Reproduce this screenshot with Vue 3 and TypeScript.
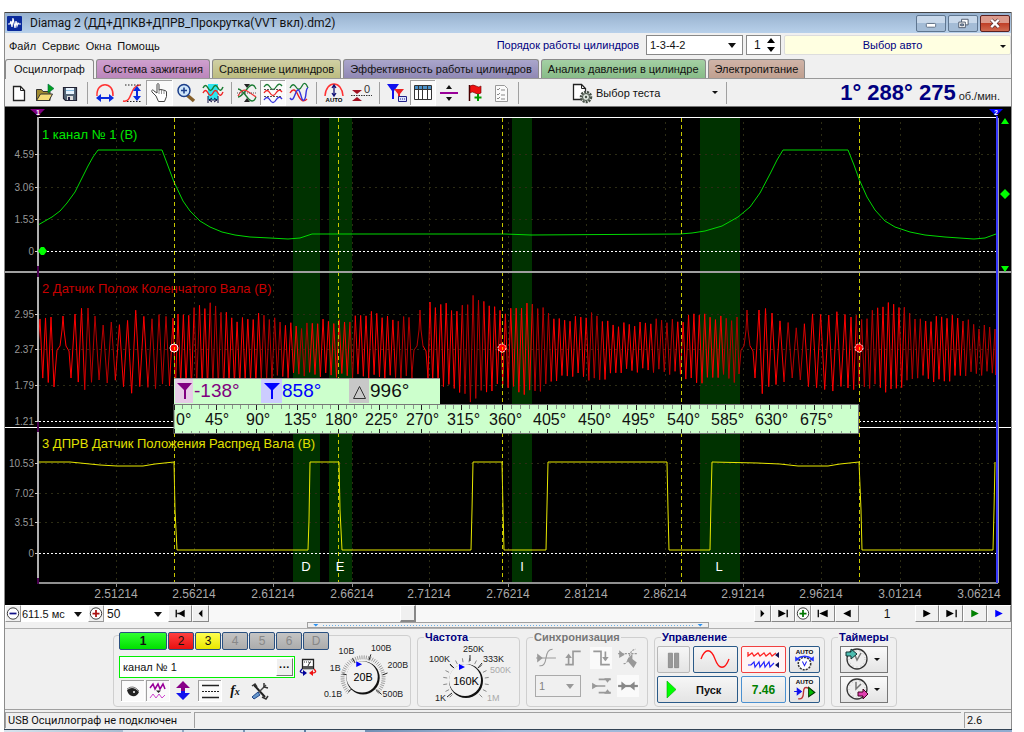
<script setup lang="ts">
import { ref } from 'vue'

type Point = [number, number]

const menu = ['Файл', 'Сервис', 'Окна', 'Помощь']

const tabs = [
  { label: 'Осциллограф', tone: 'plain' },
  { label: 'Система зажигания', tone: 'pink' },
  { label: 'Сравнение цилиндров', tone: 'olive' },
  { label: 'Эффективность работы цилиндров', tone: 'violet' },
  { label: 'Анализ давления в цилиндре', tone: 'green' },
  { label: 'Электропитание', tone: 'brown' },
]
const activeTab = ref(0)
const channelName = ref('канал № 1')
const cylinderCount = ref('1')
const page = ref('1')

const channels = [
  { label: '1', tone: 'lime' },
  { label: '2', tone: 'red' },
  { label: '3', tone: 'yellow' },
  { label: '4', tone: 'off' },
  { label: '5', tone: 'off' },
  { label: '6', tone: 'off' },
  { label: 'D', tone: 'off' },
]

// Plot geometry
const columns = [116, 194, 273, 352, 429, 508, 586, 665, 743, 821, 900, 979]
const timeLabels = columns.map((x, i) => ({ x, text: (2.51214 + i * 0.05).toFixed(5) }))
const gridRows = [154, 187, 219, 314, 349, 385, 463, 493, 522]
const zeroRows = [251, 421, 553]
const levels = [
  { y: 154, text: '4.59' },
  { y: 187, text: '3.06' },
  { y: 219, text: '1.53' },
  { y: 251, text: '0' },
  { y: 314, text: '2.95' },
  { y: 349, text: '2.37' },
  { y: 385, text: '1.79' },
  { y: 421, text: '1.21' },
  { y: 463, text: '10.53' },
  { y: 493, text: '7.02' },
  { y: 522, text: '3.51' },
  { y: 553, text: '0' },
]
const bands = [
  { x: 293, w: 27, name: 'D', tx: 306 },
  { x: 329, w: 23, name: 'E', tx: 340 },
  { x: 512, w: 20, name: 'I', tx: 522 },
  { x: 700, w: 40, name: 'L', tx: 719 },
]
const cursors = [174, 338, 502, 681, 859]

const toPath = (points: Point[]) => points.map(([x, y]) => `${x},${y}`).join(' ')

const pressure = toPath([
  [38, 225], [45, 221], [52, 217], [60, 211], [67, 203], [75, 192], [82, 178], [88, 166], [93, 157], [98, 150],
  [162, 150], [168, 166], [174, 182], [183, 201], [190, 211], [200, 221], [210, 227], [222, 232], [235, 235],
  [250, 237], [270, 238], [288, 239], [300, 238], [312, 234], [484, 234], [505, 234], [531, 235], [680, 234],
  [692, 233], [705, 231], [722, 226], [738, 217], [750, 207], [760, 193], [770, 174], [777, 160], [783, 150],
  [848, 150], [854, 165], [859, 179], [867, 197], [875, 210], [885, 221], [895, 227], [910, 232], [925, 235],
  [945, 237], [974, 239], [985, 238], [996, 234],
])

const cam = toPath([
  [38, 462], [70, 462], [80, 463], [100, 465], [117, 466], [143, 466], [155, 464], [174, 462], [175, 510], [177, 550],
  [308, 550], [309, 520], [310, 462], [339, 462], [340, 510], [342, 550], [471, 550], [472, 510], [473, 462],
  [502, 462], [503, 510], [504, 550], [546, 550], [548, 462], [667, 462], [668, 510], [669, 550], [710, 550],
  [711, 500], [712, 462], [757, 463], [780, 464], [798, 466], [828, 466], [840, 464], [859, 462], [861, 510],
  [862, 550], [993, 550], [994, 510], [995, 462],
])

// Upper and lower envelope of the crankshaft signal, as sparse keyframes
const upper: Point[] = [
  [38, 322], [51, 315], [75, 314], [81, 306], [88, 310], [103, 323], [119, 325], [136, 312], [145, 317],
  [178, 316], [190, 313], [201, 304], [207, 308], [212, 303], [223, 312], [235, 320], [250, 319], [261, 314],
  [280, 322], [300, 327], [320, 321], [345, 322], [364, 314], [376, 313], [392, 320], [408, 318], [430, 304],
  [436, 308], [442, 301], [452, 311], [463, 307], [469, 304], [474, 291], [480, 306], [485, 300], [495, 309],
  [506, 312], [522, 306], [533, 304], [544, 310], [560, 321], [577, 318], [594, 314], [611, 325], [640, 324],
  [660, 320], [680, 322], [697, 312], [707, 317], [737, 319], [759, 308], [772, 313], [787, 324], [796, 328],
  [812, 316], [829, 313], [851, 315], [863, 320], [881, 305], [897, 304], [908, 312], [922, 322], [945, 316],
  [963, 319], [979, 327], [996, 327],
]
const lower: Point[] = [
  [38, 378], [54, 385], [79, 382], [85, 388], [99, 380], [115, 382], [133, 392], [141, 388], [163, 386], [220, 386],
  [300, 374], [410, 378], [445, 385], [461, 391], [472, 404], [478, 392], [485, 393], [499, 385], [510, 386],
  [520, 393], [531, 392], [542, 389], [553, 380], [575, 374], [597, 381], [620, 371], [650, 370], [680, 374],
  [697, 383], [720, 375], [738, 382], [763, 392], [784, 380], [801, 380], [817, 390], [834, 389], [877, 386],
  [889, 392], [901, 386], [917, 376], [942, 382], [965, 374], [996, 373],
]
const teeth: [number, number, number][] = [
  [40, 51, 5],
  [75, 88, 6],
  [95, 152, 8],
  [159, 173, 7],
  [178, 409, 5],
  [430, 737, 5],
  [759, 772, 7],
  [780, 845, 8],
  [851, 995, 5],
]
const gaps = [63, 420, 747]
const darkRuns: Point[] = [
  [86, 116], [150, 172], [196, 202], [212, 224], [262, 285], [300, 312], [350, 356], [398, 425], [465, 486],
  [533, 552], [590, 604], [655, 677], [725, 752], [786, 808], [858, 880], [905, 925], [965, 996],
]

function at(curve: Point[], x: number): number {
  for (let i = 1; i < curve.length; i++) {
    const [x0, y0] = curve[i - 1]
    const [x1, y1] = curve[i]
    if (x <= x1) return y0 + ((y1 - y0) * (x - x0)) / (x1 - x0)
  }
  return curve[curve.length - 1][1]
}

function crankRuns() {
  const peaks: number[] = []
  for (const [from, to, step] of teeth) {
    const count = Math.max(1, Math.round((to - from) / (step === 5 ? 5.4 : step)))
    for (let i = 0; i <= count; i++) peaks.push(from + ((to - from) * i) / count)
  }
  peaks.push(...gaps)
  peaks.sort((a, b) => a - b)
  const pts: Point[] = [[38, 348]]
  peaks.forEach((x, i) => {
    const jitter = (i % 3) * 2 - 2
    const next = peaks[i + 1] ?? 996
    if (gaps.includes(x)) {
      pts.push([x - 8, 374], [x - 6, 350], [x - 3, 346], [x - 1, 330], [x, x === 63 ? 316 : 310], [x + 1, 330], [x + 3, 346], [x + 6, 351], [x + 8, 378])
      return
    }
    pts.push([x, at(upper, x) + jitter])
    const mid = gaps.includes(next) ? x + 3 : (x + next) / 2
    if (!gaps.includes(next) || next - x > 10) pts.push([mid, at(lower, mid) + jitter])
  })
  const isDark = (x: number) => darkRuns.some(([a, b]) => x >= a && x < b)
  const runs: { dark: boolean; pts: Point[] }[] = []
  pts.forEach((p, i) => {
    const dark = isDark(p[0])
    const last = runs[runs.length - 1]
    if (last && last.dark === dark) last.pts.push(p)
    else runs.push({ dark, pts: i ? [pts[i - 1], p] : [p] })
  })
  return runs.map((r) => ({ dark: r.dark, d: toPath(r.pts) }))
}
const crank = crankRuns()

// Crank angle ruler
const majors = [174, 216, 256, 297, 338, 379, 421, 461, 502, 547, 591, 636, 681, 725, 769, 814, 859]
const rulerLabels = [176, 205, 246, 284, 325, 365, 406, 447, 489, 533, 578, 622, 667, 711, 755, 800].map((x, i) => ({
  x,
  text: `${i * 45}°`,
}))
const minors = majors.slice(0, -1).flatMap((x, i) => [1, 2, 3, 4].map((k) => Math.round(x + ((majors[i + 1] - x) * k) / 5)))

const dial = (cx: number, cy: number, r0: number, r1: number, count: number) =>
  Array.from({ length: count }, (_, i) => {
    const a = ((135 + (270 * i) / (count - 1)) * Math.PI) / 180
    return { x1: cx + r0 * Math.cos(a), y1: cy + r0 * Math.sin(a), x2: cx + r1 * Math.cos(a), y2: cy + r1 * Math.sin(a) }
  })
const voltTicks = dial(42, 42, 19, 23, 46)
const rateTicks = dial(46, 38, 19, 23, 16)
</script>

<template>
  <div class="desktop">
    <main class="window">
      <header class="title">
        <svg class="app-icon" viewBox="0 0 15 15">
          <rect width="15" height="15" rx="1" fill="#0a2a9c" />
          <path d="M1 8h2l1-3 1 6 1-9 2 10 1-7 1 5 1-3 1 1h2" fill="none" stroke="#fff" stroke-width="1.2" />
        </svg>
        <h1>Diamag 2 (ДД+ДПКВ+ДПРВ_Прокрутка(VVT вкл).dm2)</h1>
        <div class="win-buttons">
          <button aria-label="Свернуть"><svg viewBox="0 0 30 16"><rect x="10" y="8" width="10" height="4" rx="1" fill="#fff" stroke="#5a6a80" /></svg></button>
          <button aria-label="Развернуть"><svg viewBox="0 0 30 16"><path d="M13.500 3.500h7v6h-7z" fill="#fff" stroke="#4a5668" /><path d="M10.500 6.500h7v6h-7z" fill="#fff" stroke="#4a5668" /><path d="M12.500 8.500h3v2h-3z" fill="#8ba4c0" stroke="#4a5668" /></svg></button>
          <button class="close" aria-label="Закрыть"><svg viewBox="0 0 30 16"><path d="M11 4l8 8M19 4l-8 8" stroke="#5a3030" stroke-width="4" /><path d="M11 4l8 8M19 4l-8 8" stroke="#fff" stroke-width="2.500" /></svg></button>
        </div>
      </header>

      <div class="menu-row">
        <nav class="menu"><button v-for="m in menu" :key="m">{{ m }}</button></nav>
        <label class="order-label" for="order">Порядок работы цилиндров</label>
        <div class="select order">
          <select id="order"><option>1-3-4-2</option></select>
        </div>
        <div class="spin">
          <input v-model="cylinderCount" aria-label="Цилиндр" />
          <svg viewBox="0 0 8 14"><path d="M0 5l4-5 4 5zM0 9l4 5 4-5z" /></svg>
        </div>
        <button class="car">Выбор авто<i class="arrow"></i></button>
      </div>

      <nav class="tabs" role="tablist">
        <button v-for="(t, i) in tabs" :key="t.label" role="tab" :class="[t.tone, { active: i === activeTab }]" @click="activeTab = i">{{ t.label }}</button>
      </nav>

      <div class="toolbar">
        <div class="tools">
          <button aria-label="Новый"><svg viewBox="0 0 26 24"><path d="M8.500 5.500h7l4 4v10h-11z" fill="#fff" stroke="#222" stroke-width="1.300" /><path d="M15.500 5.500v4h4" fill="none" stroke="#222" /></svg></button>
          <button aria-label="Открыть"><svg viewBox="0 0 26 24"><path d="M5.500 19.500v-11h5l1.500 2h7v9z" fill="#a08a30" stroke="#333" /><path d="M5.500 19.500l4-6.500h12l-3.500 6.500z" fill="#f4dc78" stroke="#333" /><path d="M17 3l6 4.500-6 4.500z" fill="#00a020" stroke="#064" stroke-width=".6" /></svg></button>
          <button aria-label="Сохранить"><svg viewBox="0 0 26 24"><path d="M6.500 6.500h13v13h-11l-2-2z" fill="#567" stroke="#223" stroke-width="1.200" /><path d="M9 7h8v6H9z" fill="#e8f4ff" /><path d="M9 9.500h8" stroke="#8bd" /><path d="M10 15h6v4h-6z" fill="#ddd" /><path d="M11 16h2v3h-2z" fill="#224" /></svg></button>
        </div>
        <span class="sep"></span>
        <div class="tools wide">
          <button aria-label="Ширина"><svg viewBox="0 0 26 24"><path d="M5 15C4 0 22 0 21 15" fill="none" stroke="#f33" stroke-width="1.500" /><path d="M4 17l5-4v3h8v-3l5 4-5 4v-3H9v3z" fill="#0a2be0" /></svg></button>
          <button aria-label="Размах"><svg viewBox="0 0 26 24"><path d="M4 20C14 22 10 5 21 4" fill="none" stroke="#f33" stroke-width="1.500" /><path d="M6 4h16M8 20.500h14" stroke="#222" stroke-dasharray="1.500 1.500" /><path d="M18 5l4 5h-3v5h3l-4 5-4-5h3v-5h-3z" fill="#0a2be0" /></svg></button>
          <button class="on" aria-label="Рука"><svg viewBox="0 0 26 24"><path d="M10 16l-4-4c-1-2 1-3 2-1l3 2V5c0-2 2-2 2 0v5l2-.5 2 .5 2 .5 1.500 1v5l-2 5h-6z" fill="#fff" stroke="#444" /><path d="M13 10v4M15.500 10v4M18 11v3" stroke="#777" stroke-width=".8" /></svg></button>
          <button aria-label="Лупа"><svg viewBox="0 0 26 24"><path d="M14 14l7 6" stroke="#86602a" stroke-width="3.500" /><circle cx="11" cy="9.500" r="6" fill="#cfe6fa" stroke="#1c3f8a" stroke-width="1.500" /><path d="M8 9.500h6M11 6.500v6" stroke="#1c3f8a" stroke-width="1.600" /></svg></button>
          <button aria-label="Фрагмент"><svg viewBox="0 0 26 24"><path d="M8 3h10v16H8z" fill="#2ee4ee" /><path d="M3 7q2.500-5 5 0t5 0 5 0 5-1" fill="none" stroke="#187a30" stroke-width="1.500" /><path d="M3 12q2.500-5 5 0t5 0 5 0 5-1" fill="none" stroke="#e22" stroke-width="1.400" /><path d="M8 15v7M18 15v7M9 19h8M12 17l-3 2 3 2M14 17l3 2-3 2" fill="none" stroke="#114" /></svg></button>
        </div>
        <span class="sep narrow"></span>
        <div class="tools">
          <button aria-label="Центр"><svg viewBox="0 0 26 24"><path d="M4 16q3 0 9-8t9 0" fill="none" stroke="#187a30" stroke-width="1.300" /><path d="M4 8q3 0 9 8t9 0" fill="none" stroke="#187a30" stroke-width="1.300" /><path d="M4 15q4-8 9-5t9 6" fill="none" stroke="#e33" stroke-width="1.300" /><path d="M3 12h20" stroke="#555" stroke-dasharray="1 1" /><path d="M10 3h6l-3 4zM10 21h6l-3-4z" fill="#222" /></svg></button>
          <button class="on" aria-label="Раздельно"><svg viewBox="0 0 26 24"><path d="M4 7q3-5 6 0t6 0 6-1" fill="none" stroke="#187a30" stroke-width="1.300" /><path d="M4 13q3-5 6 0t6 0 6-1" fill="none" stroke="#e22" stroke-width="1.300" /><path d="M4 20q3-5 6 0t6 0 6-1" fill="none" stroke="#33d" stroke-width="1.300" /><path d="M4 9.500h18M4 16.500h18" stroke="#555" stroke-dasharray="2 1" /></svg></button>
          <button aria-label="Вместе"><svg viewBox="0 0 26 24"><path d="M4 7q3-6 6-1t6-1 6 2" fill="none" stroke="#187a30" stroke-width="1.300" /><path d="M4 12q4-7 8 2t9 4" fill="none" stroke="#e22" stroke-width="1.400" /><path d="M4 17c4 6 5-8 8-8s3 12 6 10 1-12 4-12" fill="none" stroke="#33d" stroke-width="1.400" /></svg></button>
        </div>
        <span class="sep"></span>
        <div class="tools wide">
          <button aria-label="Авто"><svg viewBox="0 0 26 24"><path d="M4 15C5 -1 21 -1 22 15" fill="none" stroke="#f33" stroke-width="1.500" /><path d="M13 5v9M11 7l2-3 2 3M11 12l2 3 2-3" fill="none" stroke="#117" stroke-width="1.300" /><text x="13" y="21" font-size="6" font-weight="700" text-anchor="middle">AUTO</text></svg></button>
          <button aria-label="Ноль"><svg viewBox="0 0 26 24"><path d="M4 9h10l-5 4zM4 20h10l-5-4z" fill="#a01020" /><path d="M3 14.500h21" stroke="#333" stroke-dasharray="1.500 1" /><text x="16" y="12" font-size="11" fill="#333">0</text></svg></button>
        </div>
        <span class="sep"></span>
        <div class="tools">
          <button aria-label="Маркеры"><svg viewBox="0 0 26 24"><path d="M3 3h12l-5 7v8H8v-8z" fill="#11e" /><path d="M10 8h10l-4 5v6h-2v-6z" fill="#e22" /><path d="M14.500 15.500h8v5h-8z" fill="#dde6ff" stroke="#228" /><path d="M16 18h5" stroke="#228" stroke-dasharray="1 1" /></svg></button>
          <button class="on" aria-label="Таблица"><svg viewBox="0 0 26 24"><path d="M4.500 5.500h17v14h-17z" fill="#fff" stroke="#333" /><path d="M5 6h16v3H5z" fill="#4a90c8" /><path d="M4 9.500h18M8.500 6v13M12.500 6v13M17.500 6v13" stroke="#333" /></svg></button>
          <button aria-label="Разделитель"><svg viewBox="0 0 26 24"><path d="M4 12h18" stroke="#909" stroke-width="2" /><path d="M10 8l3-4 3 4zM10 16l3 4 3-4z" fill="#111" /></svg></button>
          <button aria-label="Флаг"><svg viewBox="0 0 26 24"><path d="M7.500 4v16" stroke="#400" stroke-width="1.500" /><path d="M8 5q3-2 6 0t5 0v7q-3 2-6 0t-5 0z" fill="#e11" stroke="#600" stroke-width=".6" /><path d="M16 13v7M12.500 16.500h7" stroke="#090" stroke-width="2" /></svg></button>
          <button aria-label="Список"><svg viewBox="0 0 26 24"><path d="M7.500 4.500h9l3 3v13h-12z" fill="#fafafa" stroke="#999" /><path d="M9 8l1 1 2-2M9 13l1 1 2-2M9 17l1 1 2-2M13 9h4M13 14h4M13 18h4" fill="none" stroke="#888" /></svg></button>
        </div>
        <span class="sep"></span>
        <button class="test">
          <svg viewBox="0 0 22 22"><path d="M2.500 2.500h8l4 4v11h-12z" fill="#fff" stroke="#222" stroke-width="1.300" /><path d="M10.500 2.500v4h4" fill="none" stroke="#222" /><circle cx="15" cy="15" r="5" fill="#dfe8df" stroke="#465046" stroke-width="2.500" stroke-dasharray="2 1" /><circle cx="15" cy="15" r="3.500" fill="#dfe8df" stroke="#465046" /><circle cx="15" cy="15" r="1.200" fill="#465046" /></svg>
          Выбор теста<i class="arrow"></i>
        </button>
        <span class="sep"></span>
        <output class="readout"><b>1° 288° 275</b><small>об./мин.</small></output>
      </div>

      <svg class="scope" viewBox="5 107 1006 498">
        <rect x="5" y="107" width="1006" height="498" fill="#000" />
        <rect v-for="b in bands" :key="b.name" :x="b.x" y="118" :width="b.w" height="465" fill="#003200" />
        <g class="grid">
          <path v-for="x in columns" :key="'c' + x" :d="`M${x}.5 122V583`" />
          <path v-for="y in gridRows" :key="'r' + y" :d="`M39 ${y}.5H996`" />
        </g>
        <path v-for="y in zeroRows" :key="'z' + y" class="zero" :d="`M39 ${y}.5H996`" />

        <g class="caption">
          <text x="42" y="139" fill="#00e800">1 канал № 1 (В)</text>
          <text x="42" y="293" fill="#c80000">2 Датчик Полож Коленчатого Вала (В)</text>
          <text x="42" y="448" fill="#e0e000">3 ДПРВ Датчик Положения Распред Вала (В)</text>
        </g>

        <polyline class="wave" :points="pressure" stroke="#00d800" />
        <polyline v-for="(r, i) in crank" :key="'k' + i" class="wave" :points="r.d" :stroke="r.dark ? '#b80000' : '#ff0000'" />
        <polyline class="wave" :points="cam" stroke="#e8e800" />

        <path v-for="x in cursors" :key="'u' + x" class="cursor" :d="`M${x}.5 118V582`" />

        <path d="M38 117.500H997" stroke="#fff" />
        <path d="M5 272H1011" stroke="#a0a0a0" stroke-width="2" />
        <path d="M5 427.500H1011" stroke="#fff" />
        <path d="M38 583H998" stroke="#909090" stroke-width="2" />
        <path d="M38 117V584" stroke="#b0b0b0" stroke-width="2" />
        <path d="M38 266V277M38 422V432M38 578V584" stroke="#4a0050" stroke-width="2" />
        <path v-for="x in columns" :key="'t' + x" :d="`M${x}.5 584v3`" stroke="#909090" />
        <path v-for="l in levels" :key="'l' + l.y" :d="`M35 ${l.y}.5h3`" stroke="#ccc" />
        <text v-for="l in levels" :key="'v' + l.y" class="level" x="34" :y="l.y + 4">{{ l.text }}</text>
        <text v-for="t in timeLabels" :key="t.x" class="time" :x="t.x" y="598">{{ t.text }}</text>
        <text v-for="b in bands" :key="'n' + b.name" class="band" :x="b.tx" y="571">{{ b.name }}</text>

        <path d="M997 116V583" stroke="#3838ff" stroke-width="2" />
        <path d="M998.500 118V583" stroke="#a0a0a0" />
        <path d="M30 109h15l-7 7z" fill="#800080" />
        <text class="flag" x="38" y="115">1</text>
        <path d="M989 109h14l-7 7z" fill="#00f" />
        <text class="flag" x="996" y="115">2</text>
        <path d="M1001 124l4-6 4 6zM1000 194l5-5 5 5-5 5zM1001 266h8l-4 6z" fill="#0f0" />
        <path d="M38 251l3-4h3l3 4-3 4h-3z" fill="#0f0" />
        <g v-for="x in [174, 502, 859]" :key="'m' + x">
          <circle :cx="x" cy="348" r="4" fill="#f00" stroke="#fff" :stroke-dasharray="x === 174 ? undefined : '2 1'" />
          <path :d="`M${x}.5 347v3`" stroke="#fa0" />
        </g>

        <rect x="174" y="378" width="266" height="26" fill="#cfc" />
        <path d="M174 378.500h266" stroke="#999" />
        <path d="M175 379h18v24h-18z" fill="#e6cce6" />
        <path d="M177 383h15l-6 7v9h-2v-9z" fill="#800080" />
        <path d="M261 379h21v24h-21z" fill="#ccf" />
        <path d="M264 383h16l-7 7v9h-2v-9z" fill="#00f" />
        <path d="M349 379h20v24h-20z" fill="#c8c8c8" />
        <path d="M353.500 398.500l6-12 6 12z" fill="none" stroke="#333" />
        <g class="delta">
          <text x="194" y="397" fill="#800080">-138°</text>
          <text x="282" y="397" fill="#00f">858°</text>
          <text x="370" y="397" fill="#111">996°</text>
        </g>
        <rect x="174" y="404.500" width="684.500" height="29" fill="#cfc" stroke="#777" />
        <path v-for="x in majors" :key="'ma' + x" :d="`M${x}.5 405v5M${x}.5 429v4`" stroke="#222" />
        <path v-for="x in minors" :key="'mi' + x" :d="`M${x}.5 405v4M${x}.5 431v2`" stroke="#8a9a8a" />
        <text v-for="r in rulerLabels" :key="'rl' + r.x" class="ruler" :x="r.x" y="425">{{ r.text }}</text>
      </svg>

      <div class="scroll">
        <button class="round" aria-label="Сжать"><svg viewBox="0 0 16 16"><circle cx="8" cy="8" r="6.500" fill="#fff" stroke="#222" /><path d="M4 8h8" stroke="#118" stroke-width="2" /></svg></button>
        <div class="select span"><select aria-label="Развёртка"><option>611.5 мс</option></select></div>
        <button class="round" aria-label="Растянуть"><svg viewBox="0 0 16 16"><circle cx="8" cy="8" r="6.500" fill="#fff" stroke="#222" /><path d="M4 8h8M8 4v8" stroke="#a11" stroke-width="2" /></svg></button>
        <div class="select step"><select aria-label="Шаг"><option>50</option></select></div>
        <button class="nav" aria-label="В начало"><svg viewBox="0 0 22 16"><path d="M7 4v8M14 8H8" stroke="#111" stroke-width="1.500" /><path d="M16 4v8L9 8z" /></svg></button>
        <button class="nav small" aria-label="Назад"><svg viewBox="0 0 16 16"><path d="M10 4v8L6 8z" /></svg></button>
        <div class="track"><span class="thumb"></span></div>
        <button class="nav small" aria-label="Вперёд"><svg viewBox="0 0 16 16"><path d="M6 4v8l4-4z" /></svg></button>
        <button class="nav" aria-label="В конец"><svg viewBox="0 0 22 16"><path d="M15.500 4v8" stroke="#111" stroke-width="1.500" /><path d="M6 4v8l8-4z" /></svg></button>
        <button class="round" aria-label="Добавить"><svg viewBox="0 0 16 16"><circle cx="8" cy="8" r="6.500" fill="#fff" stroke="#222" /><path d="M4 8h8M8 4v8" stroke="#070" stroke-width="2" /></svg></button>
        <button class="nav" aria-label="Первый кадр"><svg viewBox="0 0 22 16"><path d="M6 4v8" stroke="#111" stroke-width="1.500" /><path d="M16 4v8L7 8z" /></svg></button>
        <button class="nav" aria-label="Предыдущий кадр"><svg viewBox="0 0 22 16"><path d="M15 4v8L7 8z" /></svg></button>
        <input v-model="page" class="page" aria-label="Кадр" />
        <button class="nav" aria-label="Следующий кадр"><svg viewBox="0 0 22 16"><path d="M7 4v8l8-4z" /></svg></button>
        <button class="nav" aria-label="Последний кадр"><svg viewBox="0 0 22 16"><path d="M16.500 4v8" stroke="#111" stroke-width="1.500" /><path d="M6 4v8l8-4z" /></svg></button>
        <button class="nav" aria-label="Воспроизвести"><svg viewBox="0 0 22 16"><path d="M7 4v8l8-4z" fill="#008000" /></svg></button>
        <button class="nav" aria-label="Воспроизвести всё"><svg viewBox="0 0 22 16"><path d="M7 4v8l8-4z" fill="#00f" /></svg></button>
      </div>

      <div class="splitter"><div class="grip"><i></i><span></span><i></i></div></div>

      <section class="panel">
        <div class="group input-group">
          <div class="left">
            <div class="channels">
              <button v-for="c in channels" :key="c.label" :class="c.tone">{{ c.label }}</button>
            </div>
            <div class="name-row">
              <div class="name"><input v-model="channelName" aria-label="Имя канала" /><button aria-label="Ещё">···</button></div>
              <svg viewBox="0 0 18 20"><path d="M3.500 2.500h11v9h-11z" fill="#fff" stroke="#222" stroke-width="1.300" /><path d="M5 5h8" stroke="#333" stroke-dasharray="1 1" /><path d="M4 9h10v3H4z" fill="#555" /><path d="M9 9l2-4" stroke="#222" /><path d="M3 12q-4 4 2 4" fill="none" stroke="#009" stroke-width="1.300" /><path d="M4 13v6l4-3z" fill="#009" /><path d="M15 12q4 4-2 4" fill="none" stroke="#e11" stroke-width="1.300" /><path d="M14 13v6l-4-3z" fill="#e11" /></svg>
            </div>
            <div class="icons">
              <button class="on" aria-label="Видимость"><svg viewBox="0 0 24 22"><path d="M6 10q6-5 12 2-2 5-7 4-4-1-5-6z" fill="#222" /><path d="M6 9q6-5 12 2" fill="none" stroke="#777" /><circle cx="13" cy="12" r="1" fill="#fff" /></svg></button>
              <button class="on" aria-label="Инверсия"><svg viewBox="0 0 24 22"><path d="M4 8l3-4 2 5 3-5 2 5 3-5 2 5" fill="none" stroke="#909" stroke-width="1.500" /><path d="M4 18l3-4 3 4 3-4 3 4 3-3" fill="none" stroke="#c4c" /><path d="M10 10.500h5l-2.500 2.500z" fill="#222" /></svg></button>
              <button aria-label="Смещение"><svg viewBox="0 0 24 22"><path d="M12 1l7 7h-5v3h-4V8H5z" fill="#808" /><path d="M12 20l7-7h-5v-2h-4v2H5z" fill="#11e" /></svg></button>
              <button class="on wide" aria-label="Линии"><svg viewBox="0 0 24 22"><path d="M4 5.500h17M4 17.500h17" stroke="#222" stroke-width="1.300" /><path d="M4 11.500h17" stroke="#222" stroke-dasharray="2 1" /></svg></button>
              <button aria-label="Функция"><span class="fx">f</span><small class="fx">x</small></button>
              <button aria-label="Настройка"><svg viewBox="0 0 24 22"><path d="M6 5l11 12" stroke="#222" stroke-width="2" /><path d="M18 5l-8 8" stroke="#444" stroke-width="1.500" /><path d="M4 6l3-2 2 3M16 3v4l4 1M14 17l4 2 2-3" fill="none" stroke="#333" stroke-width="1.500" /><path d="M4 17l6-5 2 3-6 4z" fill="#69c" stroke="#248" /></svg></button>
            </div>
          </div>
          <svg class="knob" viewBox="0 0 90 70" role="slider" aria-label="Предел" aria-valuenow="20">
            <line v-for="(t, i) in voltTicks" :key="i" v-bind="t" stroke="#9a9a9a" />
            <path d="M31 22l3 5M50 18l-2 6M67 37l-5 2M21 38l5 1M27 56l4-3M55 54l6 5" stroke="#222" />
            <circle cx="42" cy="42" r="17" fill="#111" /><circle cx="41" cy="41" r="16" fill="#f2f2f2" />
            <path d="M35 25v6l6-3z" fill="#00f" />
            <g font-size="9" fill="#222">
              <text x="17" y="18">10В</text><text x="50" y="15">100В</text><text x="67" y="32">200В</text>
              <text x="8" y="35">1В</text><text x="2" y="62">0.1В</text><text x="62" y="62">500В</text>
            </g>
            <text x="42" y="45" font-size="11" text-anchor="middle">20В</text>
          </svg>
        </div>

        <fieldset class="rate">
          <legend>Частота</legend>
          <svg class="knob" viewBox="0 0 98 62" role="slider" aria-label="Частота" aria-valuenow="160">
            <line v-for="(t, i) in rateTicks" :key="i" v-bind="t" stroke="#8a8a8a" />
            <path d="M30 21l5 5M50 12v6M62 20l-4 5M27 54l5-4" stroke="#222" />
            <circle cx="46" cy="38" r="17" fill="#111" /><circle cx="45" cy="37" r="16" fill="#f2f2f2" />
            <path d="M39 21v6l6-3z" fill="#00f" />
            <g font-size="9" fill="#222">
              <text x="43" y="9">250K</text><text x="9" y="19">100K</text><text x="63" y="19">333K</text>
              <text x="15" y="58">1K</text><text x="70" y="30" fill="#aaa">500K</text><text x="67" y="58" fill="#aaa">1M</text>
            </g>
            <text x="46" y="42" font-size="11" text-anchor="middle">160K</text>
          </svg>
        </fieldset>

        <fieldset class="sync">
          <legend>Синхронизация</legend>
          <div class="sync-row">
            <svg viewBox="0 0 20 20"><path d="M1 10h18M4 17q5 1 6-7t6-8" fill="none" stroke="#999" /><path d="M2 6v8l5-4z" fill="#999" /></svg>
            <svg viewBox="0 0 20 20"><path d="M3 16h7V4h7M6 16V8" fill="none" stroke="#999" stroke-width="1.500" /><path d="M3 10l3-4 3 4z" fill="#999" /></svg>
            <svg class="lit" viewBox="0 0 20 20"><path d="M3 4h7v12h8M14 4v8" fill="none" stroke="#999" stroke-width="1.500" /><path d="M11 9l3 4 3-4z" fill="#999" /></svg>
            <svg viewBox="0 0 20 20"><path d="M1 6h18M6 15q3 1 5-6t6-7" fill="none" stroke="#999" stroke-dasharray="2 1" /><path d="M2 3v7l5-3zM9 12l5-6v5l4 3-3 5z" fill="#999" /></svg>
          </div>
          <div class="sync-row">
            <div class="select num"><select disabled aria-label="Канал"><option>1</option></select></div>
            <svg viewBox="0 0 20 20"><path d="M7 4h11M3 10h10M7 16h11" stroke="#999" stroke-width="1.500" /><path d="M1 7v6l5-3zM12 3h6l-3 4zM12 17h6l-3-4z" fill="#999" /></svg>
            <svg class="lit" viewBox="0 0 20 20"><path d="M1 10h18" stroke="#888" stroke-width="2" /><path d="M4 6v8l5-4zM16 6v8l-5-4z" fill="#888" /></svg>
          </div>
        </fieldset>

        <fieldset class="control">
          <legend>Управление</legend>
          <div class="row">
            <button class="pause" disabled aria-label="Пауза"><svg viewBox="0 0 30 25"><path d="M10 6h4v14h-4zM16 6h4v14h-4z" fill="#999" stroke="#777" stroke-width=".6" /></svg></button>
            <button class="w45 blue" aria-label="Синус"><svg viewBox="0 0 43 25"><path d="M7 12C11 1 17 1 21 12S31 23 35 12" fill="none" stroke="#f11" stroke-width="1.300" /></svg></button>
            <button class="w45 redline" aria-label="Сигналы"><svg viewBox="0 0 43 25"><path d="M6 5v4l4-3 2 3 4-3 2 3 4-3 2 3 4-3 2 3 4-3" fill="none" stroke="#f22" stroke-width="1.300" /><path d="M6 18h3l3-3 1 5 4-5 1 5 4-5 1 5 4-5 1 5 4-4" fill="none" stroke="#22f" stroke-width="1.200" /><path d="M37 5v6l-4-3zM37 15v6l-4-3z" fill="#115" /></svg></button>
            <button class="w30 blue" aria-label="Авто вольт"><svg viewBox="0 0 28 25"><text x="14" y="7" font-size="6" font-weight="700" text-anchor="middle">AUTO</text><circle cx="14" cy="16" r="6" fill="#fff" stroke="#333" stroke-dasharray="2 1" stroke-width="1.500" /><path d="M6 12q8-6 16 0" fill="none" stroke="#23f" stroke-width="1.500" /><path d="M5 9v5l4-2zM23 9v5l-4-2z" fill="#23f" /><path d="M12 14l2 4 2-4" fill="none" stroke="#22e" /></svg></button>
          </div>
          <div class="row">
            <button class="start blue"><svg viewBox="0 0 12 19"><path d="M1 1v17l9-8.500z" fill="#0f0" stroke="#0a0" stroke-width=".6" /></svg>Пуск</button>
            <button class="w45 value">7.46</button>
            <button class="w30 blue" aria-label="Авто запуск"><svg viewBox="0 0 28 25"><text x="14" y="7" font-size="6" font-weight="700" text-anchor="middle">AUTO</text><path d="M8 21q5 1 5-6t5-4" fill="none" stroke="#b33" stroke-width="1.300" /><path d="M4 14h6M7 11l4 3-4 3z" fill="#11e" stroke="#11e" /><path d="M18 10v9l6-4z" fill="#0b0" stroke="#030" /></svg></button>
          </div>
        </fieldset>

        <fieldset class="timers">
          <legend>Таймеры</legend>
          <button aria-label="Таймер пуска"><svg viewBox="0 0 28 25"><circle cx="16" cy="12" r="10" fill="#eee" stroke="#333" stroke-width="1.300" /><circle cx="16" cy="12" r="8" fill="none" stroke="#bbb" stroke-dasharray="1 3" /><path d="M13 6l3 7 4-7" fill="none" stroke="#777" stroke-width="1.500" /><path d="M5 5h5V2l6 5-6 5V9H5z" fill="#4cbcb0" stroke="#133" /></svg><i class="arrow"></i></button>
          <button aria-label="Таймер остановки"><svg viewBox="0 0 28 25"><circle cx="16" cy="12" r="10" fill="#eee" stroke="#333" stroke-width="1.300" /><circle cx="16" cy="12" r="8" fill="none" stroke="#bbb" stroke-dasharray="1 3" /><path d="M15 5v7l5-5" fill="none" stroke="#777" stroke-width="1.500" /><path d="M17 15h5v-3l5 5-5 5v-3h-5z" fill="#e040b0" stroke="#402" /></svg><i class="arrow"></i></button>
        </fieldset>
      </section>

      <footer class="status">
        <span class="usb">USB Осциллограф не подключен</span>
        <span class="middle"></span>
        <span class="version">2.6</span>
      </footer>
    </main>
    <div class="taskbar"><i></i><i></i><i></i><i></i></div>
  </div>
</template>

<style>
html,
body {
  margin: 0;
  background: #fff;
}
</style>

<style scoped>
* {
  box-sizing: border-box;
}
button,
input,
select {
  font: inherit;
  color: inherit;
  margin: 0;
  padding: 0;
  border: 0;
  border-radius: 0;
  background: none;
  white-space: nowrap;
}
svg {
  display: block;
}
.desktop {
  padding: 12px 12px 0 4px;
  font: 11px/14px 'Liberation Sans', Arial, sans-serif;
  color: #111;
}
.window {
  background: #f0f0f0;
  border: solid #8c8c8c;
  border-width: 0 1px;
}
.title {
  height: 21px;
  display: flex;
  align-items: center;
  border-top: 1px solid #444;
  background: linear-gradient(#98b2cf, #b8d0ea);
  padding: 0 1px 0 2px;
}
.app-icon {
  width: 15px;
  height: 15px;
}
h1 {
  margin: 0 auto 0 8px;
  font: 12px/18px Roboto, 'Noto Sans', sans-serif;
}
.win-buttons {
  display: flex;
  gap: 2px;
}
.win-buttons button {
  width: 30px;
  height: 17px;
  border: 1px solid #5f7690;
  border-radius: 2px;
  background: linear-gradient(#c8d8ea 50%, #a4bcd6 50%);
}
.win-buttons .close {
  border-color: #5a2020;
  background: linear-gradient(#dc9a8c 45%, #c04028 50%, #d06a50);
}
.menu-row {
  height: 26px;
  display: flex;
  align-items: flex-start;
  padding-top: 2px;
}
.menu {
  display: flex;
  gap: 6px;
  padding: 4px 4px 0;
  margin-right: auto;
}
.order-label {
  color: #000080;
  padding: 3px 7px 0 0;
}
.select {
  position: relative;
  background: #fff;
}
.select select {
  appearance: none;
  display: block;
  width: 100%;
  height: 100%;
  padding: 0 16px 0 3px;
  outline: 0;
}
.select::after {
  content: '';
  position: absolute;
  right: 6px;
  top: calc(50% - 2px);
  border: 4px solid transparent;
  border-top: 5px solid #111;
  border-bottom: 0;
}
.order {
  width: 97px;
  height: 20px;
  border: 1px solid #888;
  margin-right: 3px;
}
.spin {
  width: 35px;
  height: 20px;
  border: 1px solid #888;
  background: #fff;
  display: flex;
  align-items: center;
  margin-right: 3px;
}
.spin input {
  width: 20px;
  padding-left: 7px;
  font-size: 12px;
}
.spin svg {
  width: 8px;
  height: 14px;
}
.car {
  width: 227px;
  height: 20px;
  background: #ffffe1;
  border: 1px solid #ddd;
  border-radius: 2px;
  color: #000080;
  position: relative;
  padding-right: 10px;
}
.arrow {
  display: block;
  width: 6px;
  height: 3px;
  background: #111;
  clip-path: polygon(0 0, 100% 0, 50% 100%);
}
.car .arrow {
  position: absolute;
  right: 4px;
  top: 9px;
}
.tabs {
  display: flex;
  gap: 2px;
  height: 20px;
  border-bottom: 1px solid #999;
}
.tabs button {
  padding: 0 6px;
  border: 1px solid #8a8a8a;
  border-bottom: 0;
  border-radius: 3px 3px 0 0;
}
.tabs .plain {
  padding: 0 8px;
}
.tabs .active {
  margin-bottom: -1px;
  padding-bottom: 2px;
  background: #f0f0f0;
}
.tabs .pink {
  background: linear-gradient(#cfa0cf, #bb86bb);
}
.tabs .olive {
  background: linear-gradient(#d0d0a4, #bcbc80);
}
.tabs .violet {
  background: linear-gradient(#aaa6cc, #9088b4);
}
.tabs .green {
  background: linear-gradient(#a4d0a4, #88bc88);
}
.tabs .brown {
  background: linear-gradient(#d0b4a8, #c0a090);
}
.toolbar {
  height: 28px;
  display: flex;
  align-items: center;
  border-bottom: 1px solid #777;
}
.tools {
  display: flex;
}
.tools button {
  width: 26px;
  height: 26px;
}
.tools.wide button {
  width: 27px;
}
.tools svg {
  width: 26px;
  height: 24px;
}
.on {
  background: #fafafa;
  border: solid #fff;
  border-width: 0 1px 1px 0;
  box-shadow: inset 1px 1px 0 #a0a0a0;
}
.sep {
  width: 9px;
  height: 22px;
  background: linear-gradient(#a0a0a0, #a0a0a0) 4px 0 / 1px 100% no-repeat;
}
.sep.narrow {
  width: 7px;
}
.test {
  flex: 0 0 199px;
  display: flex;
  align-items: center;
  padding: 0 4px 0 48px;
}
.test svg {
  width: 22px;
  height: 22px;
  margin-right: 3px;
}
.test .arrow {
  margin-left: auto;
}
.readout {
  margin-left: auto;
  padding-right: 11px;
  white-space: nowrap;
  color: #000080;
}
.readout b {
  font-size: 22px;
  line-height: 26px;
}
.readout small {
  font-size: 11px;
  color: #222;
  margin-left: 3px;
}
.scope {
  width: 100%;
  height: auto;
}
.grid path {
  stroke: #2c2c14;
  stroke-dasharray: 2 4;
}
.zero {
  stroke: #fff;
  stroke-dasharray: 2 2;
}
.wave {
  fill: none;
  stroke-width: 1;
  stroke-linejoin: round;
}
.cursor {
  stroke: #c8c800;
  stroke-dasharray: 4 3;
}
.caption text {
  font-size: 13px;
}
.level {
  font-size: 10px;
  fill: #999;
  text-anchor: end;
}
.time {
  font-size: 12px;
  fill: #aaa;
  text-anchor: middle;
}
.band {
  font-size: 13px;
  fill: #fff;
  text-anchor: middle;
}
.flag {
  font-size: 7px;
  font-weight: 700;
  fill: #fff;
  text-anchor: middle;
}
.delta text {
  font-size: 19px;
}
.ruler {
  font-size: 16px;
  fill: #111;
}
.scroll {
  height: 17px;
  display: flex;
  background: #f0f0f0;
}
.round {
  width: 16px;
  border: 1px solid #fff;
  border-color: #fff #999 #999 #fff;
}
.round svg {
  width: 14px;
  height: 15px;
}
.span {
  width: 67px;
}
.step {
  width: 64px;
  font-size: 12px;
}
.span select {
  padding: 0 0 0 1px;
}
.step select {
  padding: 0 0 0 3px;
}
.nav {
  width: 24px;
  border: 1px solid #fff;
  border-color: #fff #888 #888 #fff;
  background: #f0f0f0;
}
.nav svg {
  width: 22px;
  height: 15px;
}
.nav.small {
  width: 17px;
}
.nav.small svg {
  width: 15px;
}
.track {
  flex: 1;
  background: #f8f8f8;
}
.thumb {
  display: block;
  width: 16px;
  height: 17px;
  margin-left: 35%;
  background: #f0f0f0;
  border: solid #fff;
  border-width: 1px 2px 2px 1px;
  border-color: #fff #888 #888 #fff;
}
.page {
  width: 56px;
  text-align: center;
  font-size: 12px;
}
.splitter {
  height: 7px;
  border-bottom: 1px solid #b0b0b0;
  display: flex;
  justify-content: center;
}
.grip {
  width: 40%;
  height: 6px;
  border: 1px solid #a0a0a0;
  display: flex;
  align-items: center;
  gap: 4px;
  padding: 0 5px;
}
.grip span {
  flex: 1;
  height: 1px;
  background: repeating-linear-gradient(90deg, #6ab0e8 0 1px, transparent 1px 3px);
}
.grip i {
  width: 6px;
  height: 3px;
  background: #2a90f0;
  clip-path: polygon(0 0, 100% 0, 50% 100%);
}
.panel {
  height: 80px;
  display: flex;
  align-items: flex-end;
  justify-content: center;
  gap: 6px;
  padding: 0 6px 2px 0;
}
fieldset,
.group {
  margin: 0;
  min-width: 0;
  border: 1px solid #cfcfcf;
  border-radius: 4px;
  padding: 0 2px 3px;
  flex: none;
}
fieldset {
  height: 76px;
}
legend {
  font-size: 11px;
  line-height: 12px;
  font-weight: 700;
  color: #000080;
  padding: 0 1px;
  margin-left: 4px;
  white-space: nowrap;
}
.input-group {
  width: 298px;
  height: 72px;
  display: flex;
  padding: 0 0 0 5px;
}
.left {
  width: 203px;
}
.channels {
  display: flex;
  gap: 1px;
  margin-top: -4px;
}
.channels button {
  flex: none;
  width: 26px;
  height: 18px;
  border: 1px solid #2a5080;
  border-radius: 2px;
  font-size: 12px;
}
.channels .lime {
  width: 48px;
  background: linear-gradient(#30ff30, #00e000);
  font-weight: 700;
}
.channels .red {
  background: linear-gradient(#ff4040, #e81010);
}
.channels .yellow {
  background: linear-gradient(#ffff50, #e8e800);
}
.channels .off {
  background: linear-gradient(#c4c4c4, #acacac);
  color: #888;
}
.name-row {
  display: flex;
  align-items: center;
  gap: 4px;
  margin-top: 6px;
}
.name {
  width: 176px;
  height: 22px;
  border: 1px solid #00f000;
  background: #fff;
  display: flex;
  padding: 1px;
}
.name input {
  flex: 1;
  min-width: 0;
  padding-left: 2px;
}
.name button {
  width: 17px;
  line-height: 10px;
  font-weight: 700;
  background: #f0f0f0;
  border: 1px solid #999;
  border-color: #fff #777 #777 #fff;
}
.name-row svg {
  width: 18px;
  height: 20px;
}
.icons {
  display: flex;
  gap: 1px;
  margin: 2px 0 0 2px;
}
.icons button {
  width: 24px;
  height: 22px;
}
.icons .wide {
  margin-left: 2px;
}
.icons svg {
  width: 24px;
  height: 22px;
}
.fx {
  font: italic 700 14px 'Liberation Serif', serif;
}
small.fx {
  font-size: 10px;
}
.input-group .knob {
  width: 90px;
  height: 70px;
}
.rate {
  width: 103px;
}
.rate .knob {
  width: 98px;
  height: 62px;
}
.sync {
  width: 122px;
}
.sync legend {
  color: #777;
}
.sync-row {
  display: flex;
  justify-content: space-between;
  align-items: center;
  height: 26px;
  margin-top: 2px;
  padding: 0 6px;
}
.sync-row svg {
  width: 22px;
  height: 22px;
}
.lit {
  background: #fafafa;
}
.num {
  width: 46px;
  height: 22px;
  margin-right: 5px;
  border: 1px solid #aaa;
  background: #f0f0f0;
  color: #555;
}
.num::after {
  border-top-color: #999;
}
.control {
  width: 171px;
}
.row {
  display: flex;
  gap: 3px;
  margin-top: 3px;
}
.row button {
  height: 27px;
  border: 1px solid #b8b8b8;
  border-radius: 2px;
  background: linear-gradient(#f6f6f6, #e4e4e4);
}
.row .pause {
  width: 33px;
}
.row .w45 {
  width: 45px;
}
.row .w30 {
  width: 31px;
}
.row .start {
  width: 81px;
  display: flex;
  align-items: center;
  gap: 18px;
  padding-left: 8px;
  font-weight: 700;
}
.start svg {
  width: 12px;
  height: 19px;
}
.row .blue {
  border-color: #2a5a88;
}
.row .redline {
  border-color: #f04040;
  background: #fff4f4;
}
.row .value {
  border-color: #4a90d0;
  color: #008000;
  font-weight: 700;
  font-size: 12px;
}
.timers {
  width: 66px;
  padding-left: 8px;
}
.timers legend {
  margin-left: -2px;
}
.timers button {
  width: 48px;
  height: 27px;
  margin-top: 3px;
  border: 1px solid #777;
  background: linear-gradient(#fafafa, #e4e4e4);
  display: flex;
  align-items: center;
  gap: 5px;
}
.timers svg {
  width: 28px;
  height: 25px;
}
.status {
  height: 20px;
  display: flex;
  gap: 3px;
  padding: 2px 0 1px;
  border-top: 1px solid #a0a0a0;
  font: 11px/15px Roboto, 'Noto Sans', sans-serif;
}
.status span {
  border: solid #a0a0a0;
  border-width: 1px 0 0 1px;
  padding-left: 2px;
}
.usb {
  width: 186px;
  white-space: nowrap;
}
.middle {
  flex: 1;
}
.version {
  width: 47px;
}
.taskbar {
  height: 3px;
  display: flex;
  gap: 2px;
  padding-left: 119px;
  background: linear-gradient(90deg, #d8e4ee, #5c7ea4 30%, #a4bcdc 50%, #90acd0);
  border-top: 1px solid #345;
}
.taskbar i {
  width: 59px;
  background: #dce6f0;
}
</style>
